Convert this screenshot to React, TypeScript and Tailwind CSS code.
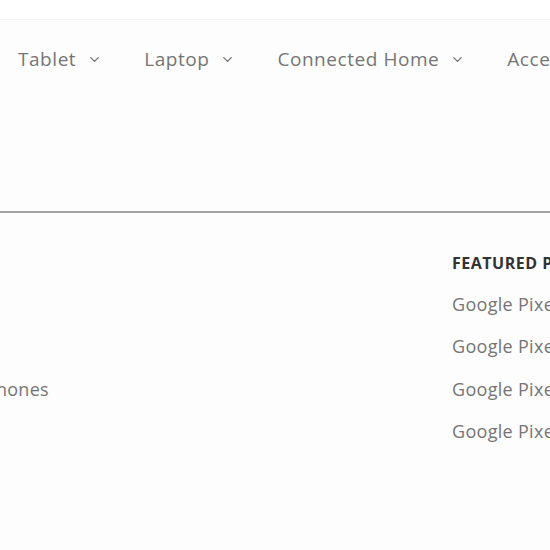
import React from "react";

const navItems = ["Tablet", "Laptop", "Connected Home", "Accessories"];

const leftLinks = ["Pixel", "Phone,", "Headphones", "Cases"];
const featured = ["Google Pixel 8 Pro", "Google Pixel 8", "Google Pixel Tablet", "Google Pixel Watch 2"];

const Chevron = () => (
  <svg width="15" height="15" viewBox="0 0 24 24" fill="none" stroke="currentColor" strokeWidth="2.2" strokeLinecap="round" strokeLinejoin="round">
    <path d="M6 9l6 6 6-6" />
  </svg>
);

export default function App() {
  return (
    <div className="w-[550px] h-[550px] overflow-hidden bg-[#fdfdfd] text-[#757575]" style={{ fontFamily: '"Open Sans", "Liberation Sans", sans-serif' }}>
      <div className="h-[20px] bg-white border-b border-[#f3f3f3]" />
      <nav className="h-[78px] flex items-center pl-[18px] gap-[42px] whitespace-nowrap">
        {navItems.map((item) => (
          <div key={item} className="flex items-center gap-[11px] text-[19px] tracking-[0.55px] shrink-0">
            <span>{item}</span>
            <Chevron />
          </div>
        ))}
      </nav>
      <div className="h-[113px]" />
      <div className="h-[2px] bg-[#a3a3a3]" />
      <div className="flex pt-[36px] whitespace-nowrap">
        <div className="w-[452px] shrink-0 flex flex-col">
          <div className="h-[28px]" />
          <ul className="flex flex-col -ml-[61px] mt-[6px] text-[18px] tracking-[0.3px]">
            {leftLinks.map((l) => (
              <li key={l} className="h-[42.5px] flex items-center">{l}</li>
            ))}
          </ul>
        </div>
        <div className="flex flex-col">
          <div className="h-[28px] flex items-center text-[16px] font-bold text-[#333] tracking-[0.5px]">FEATURED PRODUCTS</div>
          <ul className="mt-[6px] text-[18px] tracking-[0.3px]">
            {featured.map((f) => (
              <li key={f} className="h-[42.5px] flex items-center">{f}</li>
            ))}
          </ul>
        </div>
      </div>
    </div>
  );
}
